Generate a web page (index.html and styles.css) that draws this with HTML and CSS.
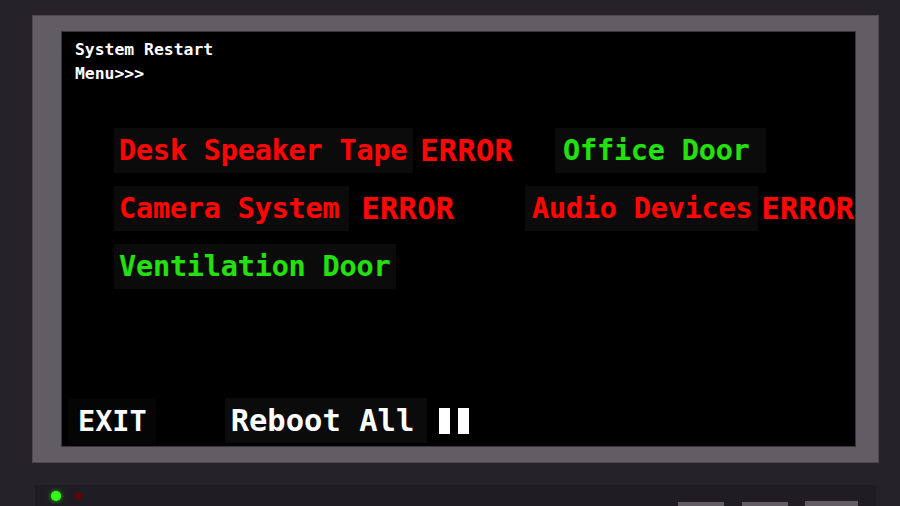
FILE: index.html
```html
<!DOCTYPE html>
<html>
<head>
  <title>System Restart</title>
  <link rel="stylesheet" href="styles.css">
</head>
<body>

  <div class="monitor">
    <div class="screen">
      <div class="screen-title">System Restart<br>Menu&gt;&gt;&gt;</div>

      <div class="menu">
        <div class="menu-row">
          <div class="menu-left">
            <span class="item item-error">Desk Speaker Tape</span>
            <span class="error-tag">ERROR</span>
          </div>
          <div class="menu-right office">
            <span class="item item-ok">Office Door</span>
          </div>
        </div>

        <div class="menu-row">
          <div class="menu-left">
            <span class="item item-error camera">Camera System</span>
            <span class="error-tag wide">ERROR</span>
          </div>
          <div class="menu-right">
            <span class="item item-error audio">Audio Devices</span>
            <span class="error-tag tight">ERROR</span>
          </div>
        </div>

        <div class="menu-row">
          <div class="menu-left">
            <span class="item item-ok">Ventilation Door</span>
          </div>
        </div>
      </div>

      <!-- bottom controls -->
      <div class="controls">
        <span class="exit-btn">EXIT</span>
        <span class="reboot-btn">Reboot All</span>
        <span class="pause-icon"><i></i><i></i></span>
      </div>
    </div>
  </div>

  <div class="console">
    <span class="led led-green"></span>
    <span class="led led-red"></span>
    <div class="console-keys">
      <span class="key"></span>
      <span class="key"></span>
      <span class="key key-big"></span>
    </div>
  </div>

</body>
</html>
```

FILE: styles.css
```css
* {
  box-sizing: border-box;
}

body {
  margin: 0;
  height: 506px;
  overflow: hidden;
  background: #25222a;
  font-family: "DejaVu Sans Mono", "Liberation Mono", monospace;
}

.monitor {
  margin: 15px 0 0 32px;
  width: 847px;
  height: 448px;
  padding: 15px 22px 15px 28px;
  background: #625c64;
  border: 1px solid #4f4a52;
}

.screen {
  height: 100%;
  background: #000;
  border: 1px solid #39353c;
  display: flex;
  flex-direction: column;
  padding: 6px 0 2px 13px;
}

.screen-title {
  color: #fff;
  font-size: 16.4px;
  font-weight: bold;
  line-height: 24px;
}

/* menu of devices */
.menu {
  flex: 1;
  display: flex;
  flex-direction: column;
  gap: 13px;
  margin-top: 42px;
  padding-left: 39px;
}

.menu-row {
  display: flex;
  align-items: center;
  height: 45px;
}

.menu-left {
  display: flex;
  align-items: center;
  width: 411px;
  height: 100%;
}

.menu-right {
  display: flex;
  align-items: center;
  height: 100%;
}

.menu-right.office {
  margin-left: 30px;
}

.item {
  display: flex;
  align-items: center;
  height: 45px;
  padding: 0 6px 0 5px;
  background: #0b0b0b;
  font-size: 28.5px;
  font-weight: bold;
  letter-spacing: -0.2px;
  white-space: nowrap;
}

.item-error {
  color: #ff0606;
  text-shadow: 0 0 1px #6a0000;
}

.item-ok {
  color: #25e010;
  text-shadow: 0 0 1px #0b4a05;
}

.office .item {
  padding: 0 16px 0 8px;
}

.camera {
  padding-right: 10px;
}

.audio {
  padding-left: 7px;
}

.error-tag {
  color: #ff0606;
  font-size: 30.5px;
  font-weight: bold;
  margin-left: 7px;
  letter-spacing: 0.2px;
  text-shadow: 0 0 1px #6a0000;
}

.error-tag.wide {
  margin-left: 12px;
}

.error-tag.tight {
  margin-left: 3px;
}

/* bottom controls */
.controls {
  display: flex;
  align-items: center;
  height: 47px;
  margin-left: -7px;
}

.exit-btn {
  display: flex;
  align-items: center;
  height: 45px;
  margin-top: 2px;
  padding: 0 9px 0 10px;
  background: #050505;
  color: #fff;
  font-size: 28.5px;
  font-weight: bold;
}

.reboot-btn {
  display: flex;
  align-items: center;
  height: 45px;
  margin-left: 69px;
  padding: 0 13px 0 6px;
  background: #0b0b0b;
  color: #fff;
  font-size: 30.5px;
  font-weight: bold;
  white-space: nowrap;
}

.pause-icon {
  display: flex;
  gap: 8px;
  margin-left: 12px;
}

.pause-icon i {
  display: block;
  width: 11px;
  height: 26px;
  background: #fff;
}

/* desk panel under the monitor */
.console {
  display: flex;
  align-items: flex-start;
  margin: 22px 0 0 35px;
  width: 841px;
  height: 30px;
  padding: 6px 18px 0 16px;
  background: #1f1d23;
}

.led {
  display: block;
  border-radius: 50%;
}

.led-green {
  width: 10px;
  height: 10px;
  background: #33ff1a;
  box-shadow: 0 0 4px #2bd014;
}

.led-red {
  width: 9px;
  height: 8px;
  margin: 1px 0 0 13px;
  background: #520a0d;
}

.console-keys {
  display: flex;
  align-items: flex-start;
  margin-left: auto;
  margin-top: 10px;
}

.key {
  display: block;
  width: 46px;
  height: 20px;
  margin-top: 1px;
  margin-left: 18px;
  background: #625c64;
}

.key-big {
  width: 53px;
  margin-top: 0;
  margin-left: 17px;
}
```
